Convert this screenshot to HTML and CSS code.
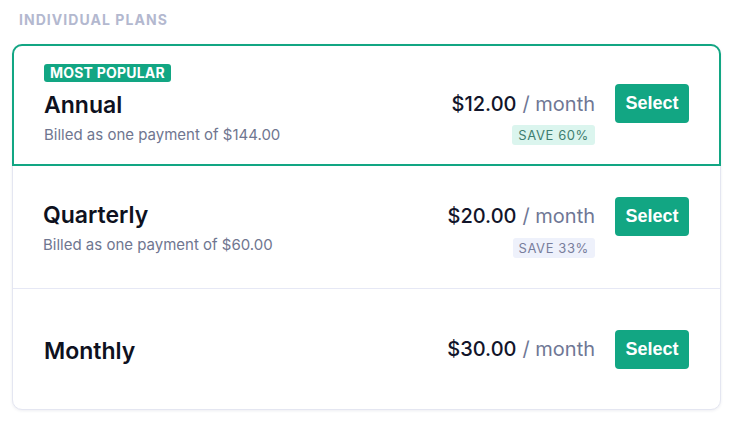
FILE: index.html
```html
<!DOCTYPE html>
<html lang="en">
<head>
<meta charset="utf-8">
<title>Individual plans</title>
<link rel="stylesheet" href="styles.css">
</head>
<body>
<div class="page">
  <h2 class="heading">INDIVIDUAL PLANS</h2>
  <div class="card">
    <div class="plan popular">
      <span class="tag">MOST POPULAR</span>
      <div class="plan-main">
        <div class="info">
          <div class="title">Annual</div>
          <div class="sub">Billed as one payment of $144.00</div>
        </div>
        <div class="pricing">
          <div class="price"><span class="amount">$12.00</span><span class="per">/ month</span></div>
          <button class="select">Select</button>
          <span class="save save-green">SAVE 60%</span>
        </div>
      </div>
    </div>
    <div class="plan divided">
      <div class="plan-main">
        <div class="info">
          <div class="title">Quarterly</div>
          <div class="sub">Billed as one payment of $60.00</div>
        </div>
        <div class="pricing">
          <div class="price"><span class="amount">$20.00</span><span class="per">/ month</span></div>
          <button class="select">Select</button>
          <span class="save save-gray">SAVE 33%</span>
        </div>
      </div>
    </div>
    <div class="plan last">
      <div class="plan-main">
        <div class="info">
          <div class="title">Monthly</div>
        </div>
        <div class="pricing">
          <div class="price"><span class="amount">$30.00</span><span class="per">/ month</span></div>
          <button class="select">Select</button>
        </div>
      </div>
    </div>
  </div>
</div>
</body>
</html>
```
FILE: styles.css
```css
* { box-sizing: border-box; }
html, body { margin: 0; background: #ffffff; }
body { font-family: Inter, "Noto Sans", sans-serif; color: #12152a; }

.page { padding: 10px 12px; }

.heading {
  margin: 0 0 14px;
  padding-left: 7px;
  font-size: 14px;
  line-height: 20px;
  font-weight: 700;
  letter-spacing: 1.05px;
  color: #b3b8cf;
}

.card {
  border: 1px solid #e4e6f1;
  border-radius: 10px;
  background: #fff;
  box-shadow: 0 1px 3px rgba(30, 40, 90, 0.08);
}

.plan {
  display: flex;
  flex-direction: column;
  justify-content: center;
  padding: 0 31px;
}

.popular {
  height: 122px;
  margin: -1px -1px 0;
  padding: 0 30px 0 30px;
  border: 2px solid #12a683;
  border-radius: 10px 10px 0 0;
}

.divided {
  height: 123px;
  border-bottom: 1px solid #e6e8f5;
}

.last { height: 120px; }

.tag {
  align-self: flex-start;
  height: 18px;
  padding: 0 6px;
  border-radius: 3px;
  background: #12a683;
  color: #fff;
  font-size: 14px;
  line-height: 18px;
  font-weight: 700;
  letter-spacing: 0.2px;
}

.plan-main {
  display: flex;
  align-items: center;
  justify-content: space-between;
}

.popular .plan-main { margin-top: 1px; }

.info { padding-top: 3px; }

.title {
  font-size: 23px;
  line-height: 28px;
  font-weight: 600;
  color: #0e1120;
}

.popular .title { margin-top: 5px; }

.divided .info { margin-left: -1px; }

.sub {
  margin-top: 5px;
  font-size: 15px;
  line-height: 22px;
  color: #6f7690;
}

.pricing {
  display: grid;
  grid-template-columns: auto auto;
  column-gap: 20px;
  row-gap: 2px;
  justify-items: end;
  align-items: center;
}

.price {
  height: 39px;
  display: flex;
  align-items: center;
  font-size: 20px;
  line-height: 28px;
}

.amount { font-weight: 500; color: #12152a; }
.per { margin-left: 6px; color: #6f7795; }

.select {
  width: 74px;
  height: 39px;
  padding: 0;
  border: 0;
  border-radius: 4px;
  background: #12a683;
  color: #fff;
  font-family: "Liberation Sans", Arial, sans-serif;
  font-size: 18px;
  font-weight: 700;
  cursor: pointer;
}

.save {
  grid-column: 1;
  height: 20px;
  padding: 0 6px;
  border-radius: 3px;
  font-size: 13px;
  line-height: 20px;
  letter-spacing: 0.6px;
}

.save-green { background: #dbf5ee; color: #3e7d6f; }
.save-gray { background: #eef1fb; color: #787e9b; }
```
